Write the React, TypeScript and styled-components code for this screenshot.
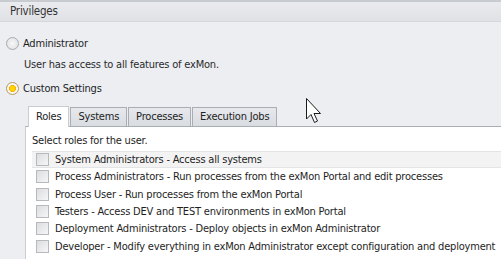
import React, { FC } from "react";
import styled, { createGlobalStyle } from "styled-components";

const GlobalStyle = createGlobalStyle`
  html, body {
    margin: 0;
    padding: 0;
    background: #eceef2;
  }
  body {
    font-family: Tahoma, "DejaVu Sans Condensed", "Liberation Sans", sans-serif;
    font-size: 11px;
    letter-spacing: -0.2px;
    color: #1e1e1e;
  }
`;

const Page = styled.div`
  position: relative;
  width: 501px;
  height: 259px;
  overflow: hidden;
  background: #eceef2;
`;

const Header = styled.div`
  height: 22px;
  line-height: 19px;
  padding-left: 10px;
  font-size: 11.5px;
  color: #333;
  background: linear-gradient(#e9ebee, #dfe1e5);
  border-top: 2px solid #c8cbd0;
  border-bottom: 1px solid #d4d7dc;
  box-sizing: border-box;
`;

const Body = styled.div`
  padding: 12px 0 0 6px;
`;

const RadioRow = styled.div`
  display: flex;
  align-items: center;
  gap: 4px;
  height: 18px;
`;

const RadioDot = styled.span<{ $checked?: boolean }>`
  width: 11px;
  height: 11px;
  border-radius: 50%;
  border: 1px solid ${(p) => (p.$checked ? "#b79a5a" : "#a8abb1")};
  background: ${(p) =>
    p.$checked
      ? "radial-gradient(circle, #ffd400 0 2.6px, #f5a800 3.2px, #f7f7f7 3.8px)"
      : "radial-gradient(circle, #f8f8f8, #dcdde0)"};
`;

const Hint = styled.div`
  padding: 6px 0 0 18px;
  height: 20px;
  color: #2a2a2a;
  margin-bottom: 1px;
`;

const TabArea = styled.div`
  margin: 8px 0 0 19px;
`;

const TabStrip = styled.div`
  display: flex;
  align-items: flex-end;
  padding-left: 3px;
  height: 21px;
`;

const Tab = styled.div<{ $active?: boolean }>`
  height: ${(p) => (p.$active ? "21px" : "19px")};
  line-height: ${(p) => (p.$active ? "20px" : "18px")};
  padding: 0 7px;
  box-sizing: border-box;
  border: 1px solid ${(p) => (p.$active ? "#c9ccd1" : "#a9adb4")};
  border-bottom: none;
  margin-right: 1px;
  background: ${(p) => (p.$active ? "#ffffff" : "linear-gradient(#e6e8ec, #d9dce1)")};
  color: #222;
  position: relative;
  top: ${(p) => (p.$active ? "1px" : "0")};
`;

const Panel = styled.div`
  background: #ffffff;
  border-top: 1px solid #a9adb4;
  border-left: 1px solid #c9ccd1;
  padding: 7px 0 0 6px;
  height: 140px;
`;

const PanelTitle = styled.div`
  height: 17px;
`;

const RoleList = styled.div`
  display: flex;
  flex-direction: column;
`;

const RoleRow = styled.div<{ $focused?: boolean }>`
  display: flex;
  align-items: center;
  gap: 6px;
  height: 17.3px;
  box-sizing: border-box;
  padding-left: 4px;
  white-space: nowrap;
  background: ${(p) => (p.$focused ? "#f3f3f4" : "transparent")};
  border-top: 1px solid ${(p) => (p.$focused ? "#e3e4e6" : "transparent")};
  border-bottom: 1px solid ${(p) => (p.$focused ? "#e3e4e6" : "transparent")};
`;

const Check = styled.span`
  width: 11px;
  height: 11px;
  border: 1px solid #b7b9bd;
  background: linear-gradient(135deg, #dcdde0, #f6f6f7);
  flex-shrink: 0;
`;

const Cursor = styled.svg`
  position: absolute;
  left: 305px;
  top: 97px;
`;

const roles = [
  "System Administrators - Access all systems",
  "Process Administrators - Run processes from the exMon Portal and edit processes",
  "Process User - Run processes from the exMon Portal",
  "Testers - Access DEV and TEST environments in exMon Portal",
  "Deployment Administrators - Deploy objects in exMon Administrator",
  "Developer - Modify everything in exMon Administrator except configuration and deployment",
];

const tabs = ["Roles", "Systems", "Processes", "Execution Jobs"];

const App: FC = () => {
  return (
    <>
      <GlobalStyle />
      <Page>
        <Header>Privileges</Header>
        <Body>
          <RadioRow>
            <RadioDot />
            Administrator
          </RadioRow>
          <Hint>User has access to all features of exMon.</Hint>
          <RadioRow>
            <RadioDot $checked />
            Custom Settings
          </RadioRow>
          <TabArea>
            <TabStrip>
              {tabs.map((t, i) => (
                <Tab key={t} $active={i === 0}>
                  {t}
                </Tab>
              ))}
            </TabStrip>
            <Panel>
              <PanelTitle>Select roles for the user.</PanelTitle>
              <RoleList>
                {roles.map((r, i) => (
                  <RoleRow key={r} $focused={i === 0}>
                    <Check />
                    {r}
                  </RoleRow>
                ))}
              </RoleList>
            </Panel>
          </TabArea>
        </Body>
        <Cursor width="20" height="30" viewBox="0 0 20 30">
          <path
            d="M1.5 1.5 L1.5 22 L6 17.5 L9.5 25.5 L12.5 24 L9 16.5 L15.5 16.5 Z"
            fill="#ffffff"
            stroke="#1a1a1a"
            strokeWidth="1"
            strokeLinejoin="miter"
          />
        </Cursor>
      </Page>
    </>
  );
};

export default App;
